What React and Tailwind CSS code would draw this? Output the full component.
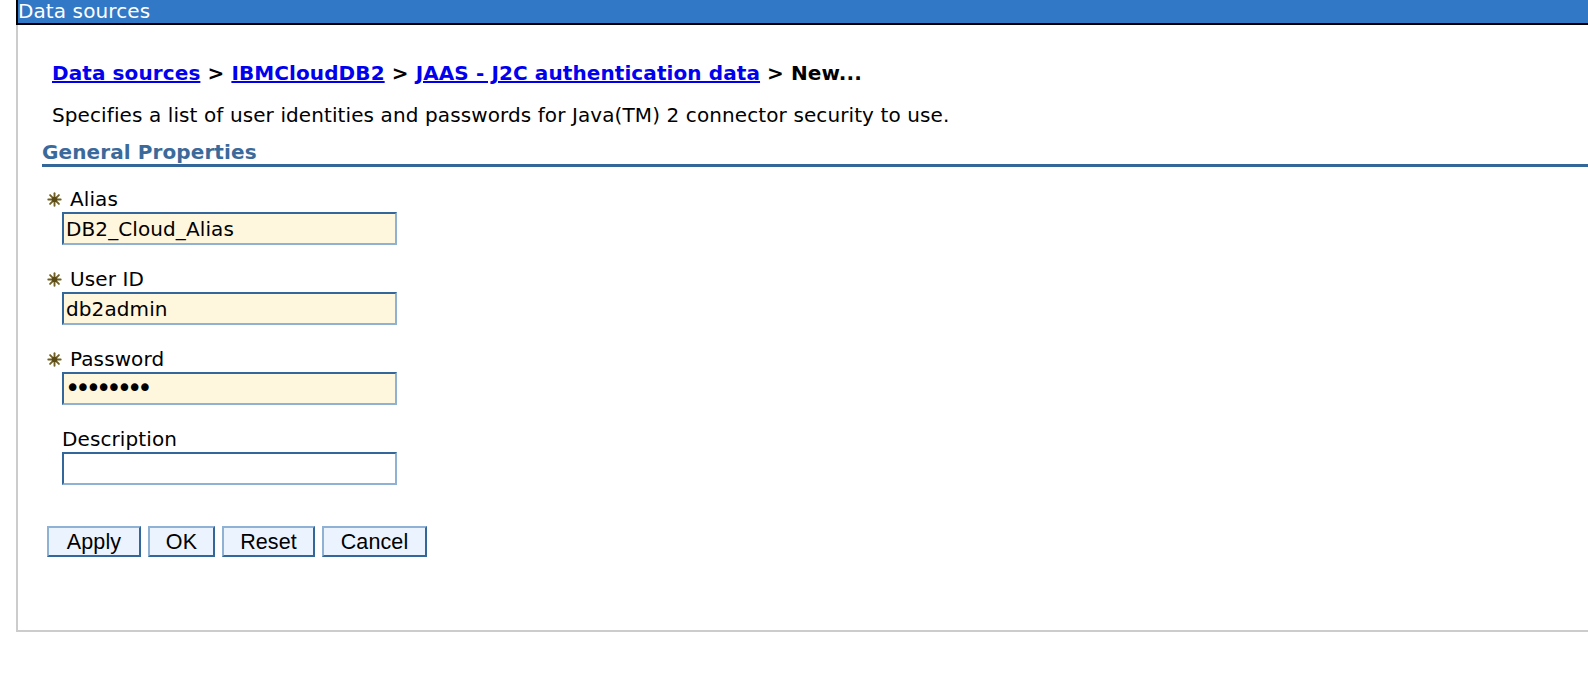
import React from "react";

function Star() {
  return (
    <svg width="15" height="15" viewBox="0 0 15 15" className="shrink-0">
      <g stroke="#6f5f24" strokeWidth="1.9" strokeLinecap="round">
        <line x1="7.5" y1="1.3" x2="7.5" y2="13.7" />
        <line x1="1.3" y1="7.5" x2="13.7" y2="7.5" />
        <line x1="3.1" y1="3.1" x2="11.9" y2="11.9" />
        <line x1="11.9" y1="3.1" x2="3.1" y2="11.9" />
      </g>
      <circle cx="7.5" cy="7.5" r="2.8" fill="#5a4a14" />
    </svg>
  );
}

function Field({ label, required, value, type = "text", filled = true }) {
  const isPw = type === "password";
  return (
    <div className="mb-[22px]">
      <div className="flex items-center h-[24px] leading-[24px]">
        {required ? (
          <>
            <div className="ml-[5px] mr-[8px] flex items-center">
              <Star />
            </div>
            <span>{label}</span>
          </>
        ) : (
          <span className="ml-[20px]">{label}</span>
        )}
      </div>
      <input
        type={type}
        readOnly
        value={value}
        className={`mt-[1px] ml-[20px] block w-[335px] h-[33px] border-2 border-t-[#336699] border-l-[#336699] border-b-[#8fb2d4] border-r-[#8fb2d4] text-black outline-none ${
          filled ? "bg-[#fff6de]" : "bg-white"
        } ${isPw ? "text-[26px] tracking-[-5px] pl-[1px]" : "text-[20px] pl-[2px] tracking-[0.1px]"}`}
        style={{ fontFamily: '"DejaVu Sans", Verdana, sans-serif' }}
      />
    </div>
  );
}

function Btn({ children, w }) {
  return (
    <button
      className={`${w} h-[31px] bg-[#ebf3ff] border-2 border-t-[#8fb2d4] border-l-[#8fb2d4] border-b-[#336699] border-r-[#336699] text-[21.5px] leading-[26px] text-black text-center`}
      style={{ fontFamily: '"Liberation Sans", Arial, sans-serif' }}
    >
      {children}
    </button>
  );
}

export default function App() {
  const link = "text-[#0000ee] underline";
  return (
    <div
      className="w-[1588px] h-[680px] bg-white overflow-hidden text-[20px] text-black tracking-[0.1px]"
      style={{ fontFamily: '"DejaVu Sans", Verdana, sans-serif' }}
    >
      <div className="ml-[16px] h-[25px] bg-[#3179c7] border-l-2 border-b-2 border-black text-white leading-[23px]">
        Data sources
      </div>
      <div className="ml-[16px] h-[607px] border-l-2 border-b-2 border-[#cccccc] pl-[24px] pt-[36px]">
        <div className="pl-[10px] leading-[24px] font-bold">
          <a className={link}>Data sources</a> &gt;{" "}
          <a className={link}>IBMCloudDB2</a> &gt;{" "}
          <a className={link}>JAAS - J2C authentication data</a> &gt; New...
        </div>
        <div className="mt-[18px] pl-[10px] leading-[24px]">
          Specifies a list of user identities and passwords for Java(TM) 2
          connector security to use.
        </div>
        <div className="mt-[13px] leading-[24px] font-bold text-[#3a6a9b] border-b-[3px] border-[#336699]">
          General Properties
        </div>
        <div className="mt-[20px]">
          <Field label="Alias" required value="DB2_Cloud_Alias" />
          <Field label="User ID" required value="db2admin" />
          <Field label="Password" required value="password" type="password" />
          <Field label="Description" value="" filled={false} />
        </div>
        <div className="mt-[41px] ml-[5px] flex gap-[7px]">
          <Btn w="w-[94px]">Apply</Btn>
          <Btn w="w-[67px]">OK</Btn>
          <Btn w="w-[93px]">Reset</Btn>
          <Btn w="w-[105px]">Cancel</Btn>
        </div>
      </div>
    </div>
  );
}
